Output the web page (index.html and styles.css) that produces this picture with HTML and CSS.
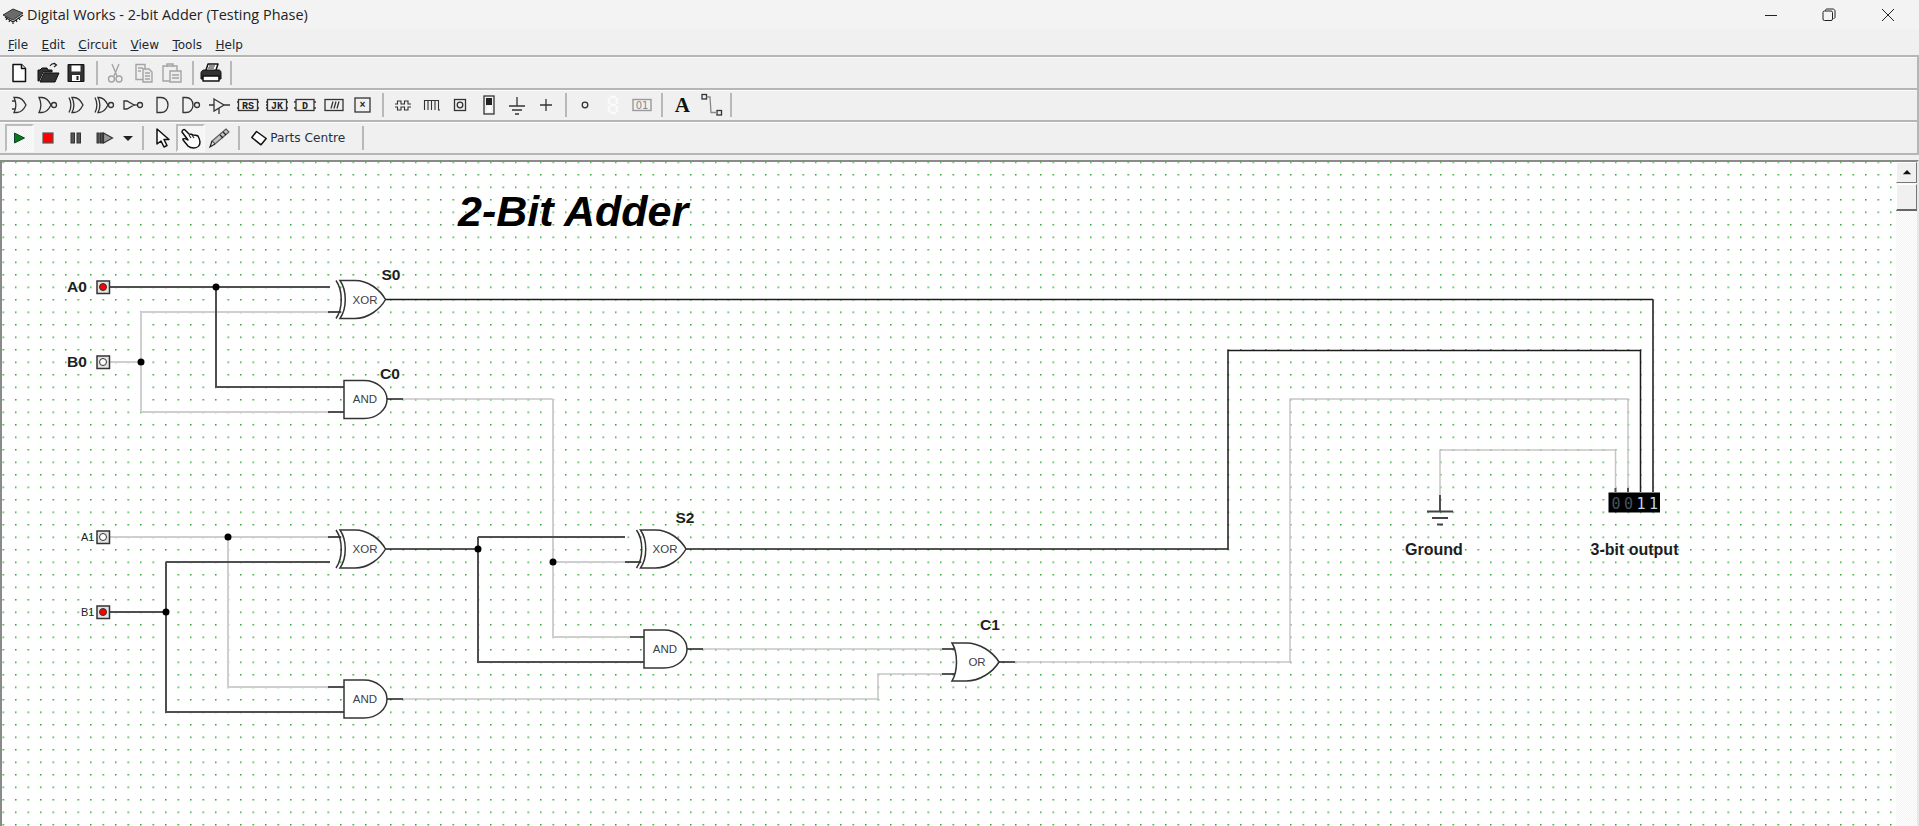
FILE: index.html
```html
<!DOCTYPE html>
<html lang="en">
<head>
<meta charset="utf-8">
<title>Digital Works - 2-bit Adder (Testing Phase)</title>
<link rel="stylesheet" href="styles.css">
</head>
<body>
<svg class="defs" aria-hidden="true">
  <defs>
    <g id="i-or"><path d="M7 4.500h3c4 0 7 3.500 9 7.500-2 4-5 7.500-9 7.500H7c2.500-5 2.500-10 0-15z"/><path d="M5 8h3M5 16h3"/></g>
    <g id="i-nor"><path d="M3 4.500h3c4 0 7 3.500 9 7.500-2 4-5 7.500-9 7.500H3c2.500-5 2.500-10 0-15z"/><circle cx="18" cy="12" r="2.500"/></g>
    <g id="i-xor"><path d="M8 4.500h2c4 0 7 3.500 9 7.500-2 4-5 7.500-9 7.500H8c2.500-5 2.500-10 0-15z"/><path d="M5 4.500c2.500 5 2.500 10 0 15"/></g>
    <g id="i-xnor"><path d="M5 4.500h1c4 0 7 3.500 9 7.500-2 4-5 7.500-9 7.500H5c2.500-5 2.500-10 0-15z"/><path d="M2 4.500c2.500 5 2.500 10 0 15"/><circle cx="18" cy="12" r="2.500"/></g>
    <g id="i-and"><path d="M7 4.500h4c4 0 7 3 7 7.500s-3 7.500-7 7.500H7z"/></g>
    <g id="i-nand"><path d="M4 4.500h3c4 0 7 3 7 7.500s-3 7.500-7 7.500H4z"/><circle cx="18" cy="12" r="2.500"/></g>
    <g id="g-and"><path class="gate" d="M0 0H20C33 0 43 9 43 19S33 38 20 38H0Z"/></g>
    <g id="g-or"><path class="gate" d="M0 0H14C28 0 41 9 47 19 41 29 28 38 14 38H0C6 28 6 10 0 0Z"/></g>
    <g id="g-xor"><path class="gate" d="M0 0H15C28 0 40 9 45.500 19 40 29 28 38 15 38H0C7 28 7 10 0 0Z"/><path class="gate-back" d="M-4 0C3 10 3 28-4 38"/></g>
    <pattern id="dots" x="2.500" y="161.500" width="12.500" height="12.500" patternUnits="userSpaceOnUse"><rect class="dot" width="1.500" height="1.500"/></pattern>
  </defs>
</svg>

<div class="app">
  <header class="titlebar">
    <svg class="app-icon" viewBox="0 0 22 18"><path class="chip" d="M1 9 11 3l10 4-10 7z"/><path class="chip-pins" d="M3 11l8 5 10-7M5 12l-1 2M8 14l-1 2M11 16v2M14 14l1 2M17 12l1 2"/></svg>
    <span class="app-title">Digital Works - 2-bit Adder (Testing Phase)</span>
    <div class="win-controls">
      <button class="win-btn"><svg viewBox="0 0 14 14"><path d="M1 7.500h12"/></svg></button>
      <button class="win-btn"><svg viewBox="0 0 14 14"><rect x="1" y="3" width="9.500" height="9.500" rx="1.500"/><path d="M3.500 3V2.500C3.500 1.500 4 1 5 1h6c1 0 2 1 2 2v6c0 1-.5 1.500-1.500 1.500"/></svg></button>
      <button class="win-btn"><svg viewBox="0 0 14 14"><path d="M1 1l12 12M13 1 1 13"/></svg></button>
    </div>
  </header>

  <nav class="menubar">
    <span class="menu-item"><u>F</u>ile</span>
    <span class="menu-item"><u>E</u>dit</span>
    <span class="menu-item"><u>C</u>ircuit</span>
    <span class="menu-item"><u>V</u>iew</span>
    <span class="menu-item"><u>T</u>ools</span>
    <span class="menu-item"><u>H</u>elp</span>
  </nav>

  <div class="toolbar">
    <span class="tb"><svg viewBox="0 0 24 24"><path class="ic-w" d="M6 3.500h8.500l4 4v13H6z"/><path class="ic-w" d="M14.500 3.500v4h4"/></svg></span>
    <span class="tb"><svg viewBox="0 0 24 24"><path class="ic-k" d="M2 20V9h2l2-2h5l1 2h4v2H7L3 20z"/><path class="ic-k" d="M4 21l4-9h15l-4 9z"/><path class="ic-s" d="M14 5c2-3 5-3 6-1M18 2l2.500 2L18 6"/></svg></span>
    <span class="tb"><svg viewBox="0 0 24 24"><path class="ic-k" d="M4 3.500h16v17H4z"/><rect class="fill-w" x="7.500" y="4.500" width="9" height="6"/><rect class="fill-w" x="8" y="14" width="8" height="6"/><rect class="fill-k" x="12.500" y="15" width="2" height="4"/></svg></span>
    <i class="sep"></i>
    <span class="tb"><svg viewBox="0 0 24 24"><path class="ic-g" d="M9 3l5 12M16 3l-5 12"/><circle class="ic-g" cx="8.500" cy="18" r="3"/><circle class="ic-g" cx="16" cy="18" r="3"/></svg></span>
    <span class="tb"><svg viewBox="0 0 24 24"><path class="ic-g" d="M4 3.500h9v15H4z"/><path class="ic-gf" d="M11 8h6l3 3v10h-9z"/><path class="ic-g" d="M13 12h5M13 15h5M13 18h5M6 7h5M6 10h3"/></svg></span>
    <span class="tb"><svg viewBox="0 0 24 24"><path class="ic-g" d="M3 5h14v15H3z"/><path class="ic-g" d="M7 6V3h6v3"/><path class="ic-gf" d="M10 10h11v11H10z"/><path class="ic-g" d="M12 14h7M12 17h7"/></svg></span>
    <i class="sep"></i>
    <span class="tb"><svg viewBox="0 0 24 24"><path class="ic-w" d="M7 9l2-6h10l-2 6"/><path class="ic-k" d="M2 12c0-2 2-3 3-3h15c1 0 2 1 2 3v6H2z"/><path class="ic-w" d="M4 15h16v5H4z"/><path class="ic-s" d="M10 5h6M9 7h6"/></svg></span>
    <i class="sep"></i>
  </div>

  <div class="toolbar toolbar-mid">
    <span class="tb"><svg class="line" viewBox="0 0 24 24"><use href="#i-or"/></svg></span>
    <span class="tb"><svg class="line" viewBox="0 0 24 24"><use href="#i-nor"/></svg></span>
    <span class="tb"><svg class="line" viewBox="0 0 24 24"><use href="#i-xor"/></svg></span>
    <span class="tb"><svg class="line" viewBox="0 0 24 24"><use href="#i-xnor"/></svg></span>
    <span class="tb"><svg class="line" viewBox="0 0 24 24"><path d="M2 8h3l7 4-7 4H2z"/><path d="M12 12h3"/><circle cx="18" cy="12" r="2.500"/></svg></span>
    <span class="tb"><svg class="line" viewBox="0 0 24 24"><use href="#i-and"/></svg></span>
    <span class="tb"><svg class="line" viewBox="0 0 24 24"><use href="#i-nand"/></svg></span>
    <span class="tb"><svg class="line" viewBox="0 0 24 24"><path d="M7 6l10 6-10 6zM2 12h5M17 12h6M12 15v6"/></svg></span>
    <span class="tb"><svg class="line" viewBox="0 0 24 24"><rect x="2.500" y="6.500" width="19" height="11"/><path d="M1 9h2M1 15h2M21 9h2M21 15h2"/><text class="ff" x="12" y="15.500">RS</text></svg></span>
    <span class="tb"><svg class="line" viewBox="0 0 24 24"><rect x="2.500" y="6.500" width="19" height="11"/><path d="M1 9h2M1 12h2M1 15h2M21 9h2M21 15h2"/><text class="ff" x="12" y="15.500">JK</text></svg></span>
    <span class="tb"><svg class="line" viewBox="0 0 24 24"><rect x="3" y="6.500" width="18" height="11"/><path d="M1 9h2M1 15h2M21 9h2M21 15h2"/><text class="ff" x="12" y="15.500">D</text></svg></span>
    <span class="tb"><svg class="line" viewBox="0 0 24 24"><rect x="3" y="6.500" width="18" height="11"/><path d="M9 15.500l2-7M12 15.500l2-7M15 15.500l2-7"/></svg></span>
    <span class="tb"><svg class="line" viewBox="0 0 24 24"><rect x="5" y="5" width="15" height="14"/><text class="ff" x="12.500" y="15">×</text></svg></span>
    <i class="sep"></i>
    <span class="tb"><svg class="thin" viewBox="0 0 24 24"><path d="M4 11h2.500V8H10v3h3.500V8H17v3h3M4 14h2.500v3H10v-3h3.500v3H17v-3h3"/></svg></span>
    <span class="tb"><svg class="thin" viewBox="0 0 24 24"><path d="M4.500 17V7.500H8V17M8 7.500h3.500V17M11.500 17V7.500H15V17M15 7.500h3.500V17H20"/></svg></span>
    <span class="tb"><svg class="line" viewBox="0 0 24 24"><rect x="6.500" y="6.500" width="11" height="11"/><circle cx="12" cy="12" r="2.800"/></svg></span>
    <span class="tb"><svg class="line" viewBox="0 0 24 24"><rect x="7" y="3" width="10" height="18"/><rect class="fill-k" x="9" y="5" width="6" height="7"/><rect class="fill-w" x="10" y="13" width="4" height="6"/></svg></span>
    <span class="tb"><svg class="line" viewBox="0 0 24 24"><path d="M12 4v9M4 13h16M7 17h10M10 21h4"/></svg></span>
    <span class="tb"><svg class="line" viewBox="0 0 24 24"><path d="M12 6v12M6 12h12"/></svg></span>
    <i class="sep sep-tight"></i>
    <span class="tb"><svg class="line" viewBox="0 0 24 24"><circle cx="12" cy="12" r="2.800"/></svg></span>
    <span class="tb"><svg class="seg" viewBox="0 0 24 24"><path d="M9 4h6M9 12h6M9 20h6M8 5v6M16 5v6M8 13v6M16 13v6"/></svg></span>
    <span class="tb"><svg class="lcd" viewBox="0 0 24 24"><rect x="3" y="6.500" width="18" height="11"/><text x="12" y="16">01</text></svg></span>
    <i class="sep"></i>
    <span class="tb"><span class="tb-letter">A</span></span>
    <span class="tb"><svg class="line" viewBox="0 0 24 24"><rect x="3" y="1.500" width="4.500" height="4.500"/><rect x="18" y="17.500" width="4.500" height="4.500"/><path class="ln-g" d="M7.500 4h3.500l1 15.500h6"/></svg></span>
    <i class="sep"></i>
  </div>

  <div class="toolbar toolbar-end">
    <span class="tb tb-on"><svg viewBox="0 0 24 24"><path class="play" d="M7.500 7l10 5-10 5z"/></svg></span>
    <span class="tb"><svg viewBox="0 0 24 24"><rect class="stop" x="7" y="7" width="10" height="10"/></svg></span>
    <span class="tb"><svg viewBox="0 0 24 24"><rect class="pause" x="7" y="7" width="3.500" height="10"/><rect class="pause" x="13" y="7" width="3.500" height="10"/></svg></span>
    <span class="tb"><svg viewBox="0 0 24 24"><rect class="pause" x="4" y="7" width="2.200" height="10"/><rect class="pause" x="7.500" y="7" width="2.200" height="10"/><path class="pause-o" d="M10.500 7l9 5-9 5z"/></svg></span>
    <span class="tb tb-narrow"><svg viewBox="0 0 18 24"><path class="fill-k" d="M4 10h10l-5 5z"/></svg></span>
    <i class="sep"></i>
    <span class="tb"><svg viewBox="0 0 24 24"><path class="ic-w" d="M7 3v15l4-3 3 6 3-1.500-3-6h5z"/></svg></span>
    <span class="tb tb-on"><svg viewBox="0 0 24 24"><path class="ic-w" d="M4 6l6 8c-2-1-4-2-5-1-1 .5 3 4 5 7 1 1 3 2 6 2 4 0 6-3 6-6 0-2-1-4-2-6-2-1-3-1-5-1-1-1-3-1-4-1L7 4C6 3 4 4 4 6z"/><path class="ic-s" d="M11 9l2 3M14 9l2 3"/></svg></span>
    <span class="tb"><svg viewBox="0 0 24 24"><path class="ic-gf2" d="M19 3l3 3L8 18l-3-3z"/><path class="ic-s" d="M5 15l-2 6 5-3M16 6l3 3M13 9l3 3"/></svg></span>
    <i class="sep"></i>
    <span class="parts"><svg viewBox="0 0 16 16"><path class="ic-w" d="M.8 7.500 5.500 1.500 15.200 8.500 10 14.800z"/></svg><span>Parts Centre</span></span>
    <i class="sep"></i>
  </div>

  <main class="workspace">
    <div class="canvas">
      <svg class="sheet" viewBox="0 162 1894 664" preserveAspectRatio="xMinYMin slice">
        <rect x="0" y="162" width="1894" height="664" fill="url(#dots)"/>

        <g class="w-gray">
          <path d="M110 362H141M141 312V412M141 312H328M141 412H328"/>
          <path d="M110 537H328M228 537V687H328"/>
          <path d="M553 562H625"/>
          <path d="M553 399V637H630"/>
        </g>
        <g class="w-thin">
          <path d="M403 399H553"/>
          <path d="M403 699H878V674H942"/>
          <path d="M703 649H942"/>
          <path d="M1015 662H1290V399H1628V488"/>
          <path d="M1440 495V450H1615.500V488"/>
        </g>
        <g class="w-dark">
          <path d="M110 287H330M216 287V387H344"/>
          <path d="M110 612H166M166 562V712H344M166 562H330"/>
          <path d="M478 537H625M478 537V662H644"/>
          <path d="M1653 300V492"/>
          <path d="M328 312H341M328 412H344M328 537H341M328 687H344M625 562H641M630 637H644M1440 495V511M1615.500 488V492M1628 488V492"/>
        </g>
        <g class="w-black">
          <path d="M385 299.500H1653"/>
          <path d="M385 549H478"/>
          <path d="M686 549H1228V350.500H1640.500V492"/>
          <path d="M387 399H403M387 699H403M687 649H703M942 649H956M942 674H956M999 662H1015"/>
        </g>

        <use href="#g-xor" x="340" y="280.500"/>
        <use href="#g-and" x="344" y="380.500"/>
        <use href="#g-xor" x="340" y="530"/>
        <use href="#g-and" x="344" y="680"/>
        <use href="#g-xor" x="640.500" y="530"/>
        <use href="#g-and" x="644" y="630"/>
        <use href="#g-or" x="952" y="643"/>

        <g class="gate-label">
          <text x="365" y="303.500">XOR</text>
          <text x="365" y="403">AND</text>
          <text x="365" y="553">XOR</text>
          <text x="365" y="703">AND</text>
          <text x="665" y="553">XOR</text>
          <text x="665" y="653">AND</text>
          <text x="977" y="666">OR</text>
        </g>

        <g class="node">
          <circle cx="216" cy="287" r="3.500"/><circle cx="141" cy="362" r="3.500"/>
          <circle cx="228" cy="537" r="3.500"/><circle cx="166" cy="612" r="3.500"/>
          <circle cx="478" cy="549" r="3.500"/><circle cx="553" cy="562" r="3.500"/>
        </g>

        <g class="pin">
          <rect x="97" y="281" width="12.500" height="12.500"/><circle class="on" cx="103" cy="287" r="3.500"/>
          <rect x="97" y="356" width="12.500" height="12.500"/><circle cx="103" cy="362" r="3.500"/>
          <rect x="97" y="531" width="12.500" height="12.500"/><circle cx="103" cy="537" r="3.500"/>
          <rect x="97" y="606" width="12.500" height="12.500"/><circle class="on" cx="103" cy="612" r="3.500"/>
        </g>

        <g class="ground">
          <path d="M1427 511.500H1453M1432 518H1448M1437 524.500H1443"/>
        </g>

        <rect class="display" x="1608.500" y="492.500" width="51.500" height="20"/>
        <g class="digits">
          <text class="off" x="1616" y="508.500">0</text>
          <text class="off" x="1628.500" y="508.500">0</text>
          <text class="lit" x="1641" y="508.500">1</text>
          <text class="lit" x="1653.500" y="508.500">1</text>
        </g>

        <text class="title-text" x="458" y="226">2-Bit Adder</text>
        <g class="lbl">
          <text x="67" y="292">A0</text>
          <text x="67" y="367">B0</text>
          <text x="381.500" y="279.500">S0</text>
          <text x="380" y="379">C0</text>
          <text x="675.500" y="523">S2</text>
          <text x="980" y="630">C1</text>
        </g>
        <g class="lbl-big">
          <text x="1405" y="555">Ground</text>
          <text x="1590.500" y="555">3-bit output</text>
        </g>
        <g class="lbl-small">
          <text x="81" y="541">A1</text>
          <text x="81" y="616">B1</text>
        </g>
      </svg>
    </div>
    <aside class="vscroll">
      <span class="sb-btn"><svg viewBox="0 0 12 8"><path d="M6 1l5 5H1z"/></svg></span>
      <span class="sb-thumb"></span>
    </aside>
  </main>
</div>
</body>
</html>
```
FILE: styles.css
```css
* { box-sizing: border-box; }
html, body { margin: 0; height: 100%; overflow: hidden; }
body { background: #f0f0f0; font-family: "Open Sans", "Liberation Sans", sans-serif; color: #1a1a1a; }
.defs { position: absolute; width: 0; height: 0; }
.app { display: flex; flex-direction: column; height: 826px; width: 1919px; }

/* title bar */
.titlebar { display: flex; align-items: center; height: 29px; background: #f3f3f3; padding: 0 2px 0 2px; flex: none; }
.app-icon { width: 22px; height: 18px; flex: none; }
.chip { fill: #6a6a6a; stroke: #333; stroke-width: 1; }
.chip-pins { fill: none; stroke: #222; stroke-width: 1.2; }
.app-title { margin-left: 3px; font-size: 14.450px; color: #222; white-space: nowrap; }
.win-controls { margin-left: auto; display: flex; }
.win-btn { width: 58.500px; height: 29px; border: 0; background: none; padding: 0; display: flex; align-items: center; justify-content: center; }
.win-btn svg { width: 14px; height: 14px; fill: none; stroke: #222; stroke-width: 1; }

/* menu */
.menubar { display: flex; align-items: center; height: 26px; padding: 5px 0 0 8px; gap: 13.500px; flex: none; font-family: "DejaVu Sans", sans-serif; font-size: 12px; color: #1d2733; }
.menu-item { white-space: nowrap; }

/* toolbars */
.toolbar { display: flex; align-items: center; height: 33px; padding-left: 5px; flex: none; border-top: 2px solid #b6b6b6; border-right: 2px solid #b6b6b6; box-shadow: inset 0 1px #fbfbfb; }
.toolbar-mid { height: 32px; }
.toolbar-end { height: 35px; border-bottom: 2px solid #b6b6b6; }
.tb { width: 28.600px; height: 28px; display: flex; align-items: center; justify-content: center; flex: none; }
.tb svg { width: 24px; height: 24px; display: block; }
.tb-narrow { width: 18px; }
.tb-narrow svg { width: 18px; }
.tb-on { background: repeating-conic-gradient(#f0f0f0 0 25%, #fbfbfb 0 50%) 0 0 / 2px 2px; border: 2px solid; border-color: #bcbcbc #f8f8f8 #f8f8f8 #bcbcbc; }
.sep { display: block; width: 2px; height: 24px; margin: 0 3px 0 5px; background: #b8b8b8; flex: none; }
.toolbar-mid .sep { margin-right: 5px; }
.toolbar-mid .sep-tight { margin-right: 3px; }

.ic-w { fill: #fff; stroke: #111; stroke-width: 1.500; stroke-linejoin: round; }
.ic-k { fill: #333; stroke: #111; stroke-width: 1; }
.ic-s { fill: none; stroke: #222; stroke-width: 1.200; }
.ic-g { fill: none; stroke: #a4a4a4; stroke-width: 1.400; }
.ic-gf { fill: #ececec; stroke: #a4a4a4; stroke-width: 1.400; }
.ic-gf2 { fill: #c4c4c4; stroke: #555; stroke-width: 1.100; }
.fill-w { fill: #fff; stroke: none; }
.fill-k { fill: #222; stroke: none; }
.line { fill: none; stroke: #333; stroke-width: 1.300; }
.thin { fill: none; stroke: #333; stroke-width: 1.100; }
.ln-g { stroke: #888; }
.ff { font-family: "Liberation Mono", monospace; font-weight: 700; font-size: 10px; text-anchor: middle; fill: #222; stroke: none; }
.seg { fill: none; stroke: #fafafa; stroke-width: 2.500; }
.lcd { fill: none; stroke: #999; stroke-width: 1.400; }
.lcd text { font-family: "DejaVu Sans", sans-serif; font-size: 10px; text-anchor: middle; fill: #888; stroke: none; }
.tb-letter { font-family: "Liberation Serif", serif; font-weight: 700; font-size: 21px; color: #111; line-height: 1; }
.play { fill: #0a7a18; stroke: #143; stroke-width: 1; }
.stop { fill: #f00; stroke: #555; stroke-width: 1.200; }
.pause { fill: #555; stroke: #333; stroke-width: 1; }
.pause-o { fill: #999; stroke: #333; stroke-width: 1.200; }
.parts { display: flex; align-items: center; gap: 3px; padding: 0 12px 0 8px; height: 28px; font-family: "DejaVu Sans", sans-serif; font-size: 12.200px; color: #27303c; white-space: nowrap; flex: none; }
.parts svg { width: 16px; height: 16px; }

/* workspace */
.workspace { flex: 1; min-height: 0; display: flex; margin-top: 5px; background: #fff; }
.canvas { flex: 1; min-width: 0; overflow: hidden; border-top: 2px solid #8a8a8a; border-left: 2px solid #8a8a8a; background: #fff; }
.sheet { display: block; width: 1894px; height: 664px; margin-left: -2px; }
.vscroll { width: 23px; flex: none; display: flex; flex-direction: column; border-top: 2px solid #8a8a8a; border-right: 2px solid #e8e8e8; background: repeating-conic-gradient(#f2f2f2 0 25%, #fff 0 50%) 0 0 / 2px 2px; }
.sb-btn { height: 21px; background: #f0f0f0; border: 1px solid; border-color: #fff #777 #777 #fff; display: flex; align-items: center; justify-content: center; }
.sb-btn svg { width: 10px; height: 7px; fill: #111; }
.sb-thumb { height: 27px; margin-top: 1px; background: #f0f0f0; border: 1px solid; border-color: #fff #777 #666 #fff; border-bottom-width: 2px; }

/* circuit */
.dot { fill: #2ea52e; }
.gate { fill: #fff; stroke: #333; stroke-width: 1.500; }
.gate-back { fill: none; stroke: #333; stroke-width: 1.500; }
.w-gray, .w-thin, .w-dark, .w-black { fill: none; }
.w-gray path { stroke: #cfcfcf; stroke-width: 2; }
.w-thin path { stroke: #c6c6c6; stroke-width: 1.500; }
.w-dark path { stroke: #4f4f4f; stroke-width: 2; }
.w-black path { stroke: #1c1c1c; stroke-width: 1.500; }
.gate-label text { font-family: "Liberation Sans", sans-serif; font-size: 11.500px; text-anchor: middle; fill: #3c4048; }
.node { fill: #000; }
.pin rect { fill: #e4e4e4; stroke: #333; stroke-width: 1.500; }
.pin circle { fill: #fff; stroke: #333; stroke-width: 1; }
.pin circle.on { fill: #f00; }
.ground path { fill: none; stroke: #444; stroke-width: 2; }
.display { fill: #000; }
.digits text { font-family: "DejaVu Sans Mono", monospace; font-size: 15px; text-anchor: middle; }
.digits .off { fill: #46525c; }
.digits .lit { fill: #bcd6ea; }
.title-text { font-family: "Liberation Sans", sans-serif; font-weight: 700; font-style: italic; font-size: 43px; fill: #000; }
.lbl text { font-family: "Liberation Sans", sans-serif; font-weight: 700; font-size: 15.500px; fill: #1e1e1e; }
.lbl-big text { font-family: "Liberation Sans", sans-serif; font-weight: 700; font-size: 16px; fill: #1e1e1e; }
.lbl-small text { font-family: "Liberation Sans", sans-serif; font-weight: 400; font-size: 11px; fill: #222; }
```
